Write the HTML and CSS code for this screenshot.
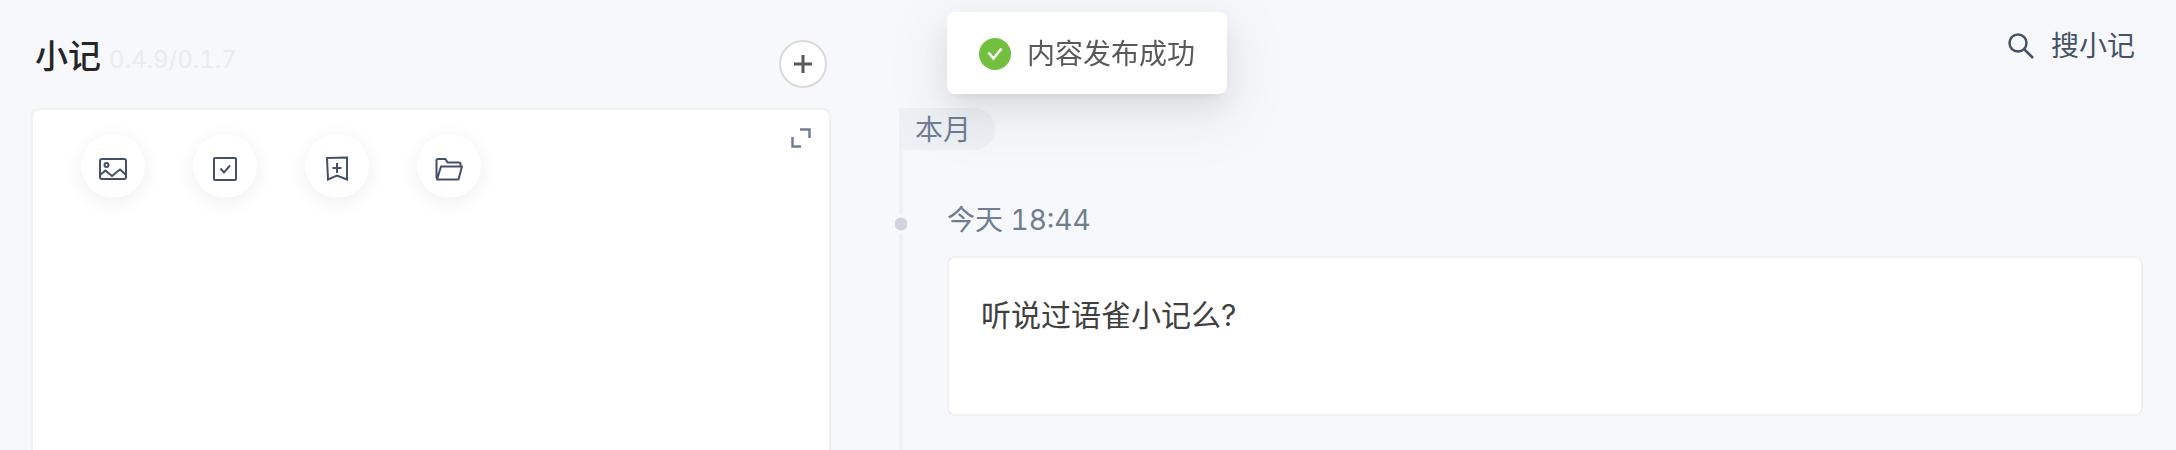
FILE: index.html
```html
<!DOCTYPE html>
<html lang="zh-CN">
<head>
  <meta charset="utf-8">
  <title>小记</title>
  <link rel="stylesheet" href="styles.css">
</head>
<body>
  <div class="page">
    <section class="editor">
      <div class="editor-header">
        <h1>小记</h1>
        <span class="version">0.4.9/0.1.7</span>
        <button class="add-btn" title="新建">
          <svg width="20" height="20" viewBox="0 0 20 20"><path d="M10 1v18M1 10h18" fill="none" stroke="#595959" stroke-width="3"/></svg>
        </button>
      </div>
      <div class="editor-card">
        <div class="toolbar">
          <button class="tool-btn" title="图片">
            <svg width="32" height="32" viewBox="0 0 32 32"><rect x="3" y="5" width="26" height="20" rx="2"/><circle cx="9.500" cy="11" r="2"/><path d="M3 21l5.500-4.500 6.500 5.500 8-6.500 6 5.500"/></svg>
          </button>
          <button class="tool-btn" title="任务">
            <svg width="32" height="32" viewBox="0 0 32 32"><rect x="5" y="4" width="22" height="22" rx="1"/><path d="M11.500 14.500l3.500 4 6-7"/></svg>
          </button>
          <button class="tool-btn" title="书签">
            <svg width="32" height="32" viewBox="0 0 32 32"><path d="M6 4L26 3.500v22L16 21.500l-9 4zM16 9v10M11.500 14h9"/></svg>
          </button>
          <button class="tool-btn" title="文件">
            <svg width="32" height="32" viewBox="0 0 32 32"><path d="M3.500 24.500V6.500q0-1.500 1.500-1.500h7.500l2 3.500h11.500q1.500 0 1.500 1.500v2M4 25.500l4-13h21l-3.500 13z" stroke-linejoin="round"/></svg>
          </button>
          <button class="expand-btn" title="展开">
            <svg width="20" height="20" viewBox="0 0 20 20"><path d="M9 1.500h9.500V10M1.500 9v9.500H10" fill="none" stroke="#717e92" stroke-width="2.500"/></svg>
          </button>
        </div>
        <textarea class="editor-input" aria-label="小记内容"></textarea>
      </div>
    </section>

    <section class="notes">
      <div class="notes-header">
        <button class="search-btn">
          <svg width="28" height="28" viewBox="0 0 28 28"><circle cx="11" cy="11" r="8.500"/><path d="M17 17l9 9"/></svg>
          搜小记
        </button>
      </div>
      <div class="timeline">
        <div class="month">本月</div>
        <article class="note">
          <time class="note-time">今天 18:44</time>
          <div class="note-card">听说过语雀小记么?</div>
        </article>
      </div>
    </section>
  </div>

  <div class="message" role="status">
    <div class="message-box">
      <svg width="32" height="32" viewBox="0 0 32 32"><circle cx="16" cy="16" r="16" fill="#73c041"/><path d="M9.500 14.500l5 6 8-10" fill="none" stroke="#fff" stroke-width="2.500"/></svg>
      <span>内容发布成功</span>
    </div>
  </div>
</body>
</html>
```

FILE: styles.css
```css
* {
  box-sizing: border-box;
}
body {
  margin: 0;
  background-color: #f7f8fc;
  color: #404040;
  font-family: Inter, "Noto Sans CJK SC", sans-serif;
  font-size: 28px;
  line-height: 32px;
  font-variant-numeric: tabular-nums;
}
button {
  padding: 0;
  border: none;
  background: none;
  font: inherit;
  cursor: pointer;
}
svg {
  display: block;
  flex: none;
}
.page {
  display: grid;
  grid-template-columns: 800px 1fr;
  gap: 68px;
  height: 100vh;
  padding: 0 33px 0 31px;
  overflow: hidden;
}

/* editor */
.editor {
  display: flex;
  flex-direction: column;
}
.editor-header {
  display: flex;
  align-items: flex-start;
  gap: 8px;
  height: 108px;
  padding: 40px 4px 0;
}
h1 {
  margin: 0;
  color: #262626;
  font-size: 33px;
  font-weight: 500;
}
.version {
  padding-top: 4px;
  color: #ebebeb;
  font-size: 24px;
}
.add-btn {
  display: flex;
  align-items: center;
  justify-content: center;
  width: 48px;
  height: 48px;
  margin-left: auto;
  border: 2px solid #d9d9d9;
  border-radius: 50%;
  background-color: #fff;
}
.editor-card {
  flex: 1;
  display: flex;
  flex-direction: column;
  border: 2px solid #f0f0f0;
  border-bottom: none;
  border-radius: 8px 8px 0 0;
  background-color: #fff;
}
.toolbar {
  display: flex;
  align-items: flex-start;
  gap: 48px;
  padding: 18px 18px 0 48px;
}
.tool-btn {
  display: flex;
  align-items: center;
  justify-content: center;
  width: 64px;
  height: 64px;
  margin-top: 6px;
  padding-top: 8px;
  border-radius: 50%;
  background-color: #fff;
  box-shadow: 0 4px 20px rgba(0, 0, 0, 0.07);
}
.tool-btn svg,
.search-btn svg {
  fill: none;
  stroke: #44506a;
  stroke-width: 2;
}
.expand-btn {
  margin-left: auto;
}
.editor-input {
  flex: 1;
  padding: 24px 48px;
  border: none;
  outline: none;
  background: none;
  font: inherit;
  resize: none;
}

/* notes */
.notes {
  display: flex;
  flex-direction: column;
}
.notes-header {
  display: flex;
  justify-content: flex-end;
  height: 108px;
  padding: 30px 8px 0;
}
.search-btn {
  display: flex;
  align-items: center;
  gap: 16px;
  height: 32px;
  color: #465367;
}
.search-btn svg {
  stroke: #465367;
  stroke-width: 2.5;
}
.timeline {
  flex: 1;
  background: linear-gradient(#eff1f8, #eff1f8) left / 4px 100% no-repeat;
}
.month {
  width: fit-content;
  padding: 2px 24px 0 16px;
  border-radius: 0 21px 21px 0;
  background-color: #edf0f5;
  color: #717e92;
  line-height: 40px;
}
.note {
  position: relative;
  padding: 54px 0 0 48px;
}
.note::before {
  content: "";
  position: absolute;
  top: 64px;
  left: -4px;
  width: 12px;
  height: 20px;
  background: radial-gradient(circle, #d0d4de 6px, #f7f8fc 7px);
}
.note-time {
  display: block;
  color: #717e92;
}
.note-card {
  min-height: 160px;
  margin-top: 20px;
  padding: 41px 32px;
  border: 2px solid #f0f0f0;
  border-radius: 8px;
  background-color: #fff;
  font-size: 30px;
}

/* message */
.message {
  position: fixed;
  top: 12px;
  left: 0;
  right: 2px;
  display: flex;
  justify-content: center;
  pointer-events: none;
}
.message-box {
  display: flex;
  align-items: center;
  gap: 16px;
  padding: 24px 32px;
  border-radius: 8px;
  background-color: #fff;
  color: #595959;
  line-height: 34px;
  box-shadow: 0 6px 12px -8px rgba(0, 0, 0, 0.12), 0 12px 32px rgba(0, 0, 0, 0.08), 0 18px 56px 16px rgba(0, 0, 0, 0.05);
}
.message-box svg {
  margin-top: 2px;
}
.message-box span {
  padding-top: 2px;
  line-height: 32px;
}
```
